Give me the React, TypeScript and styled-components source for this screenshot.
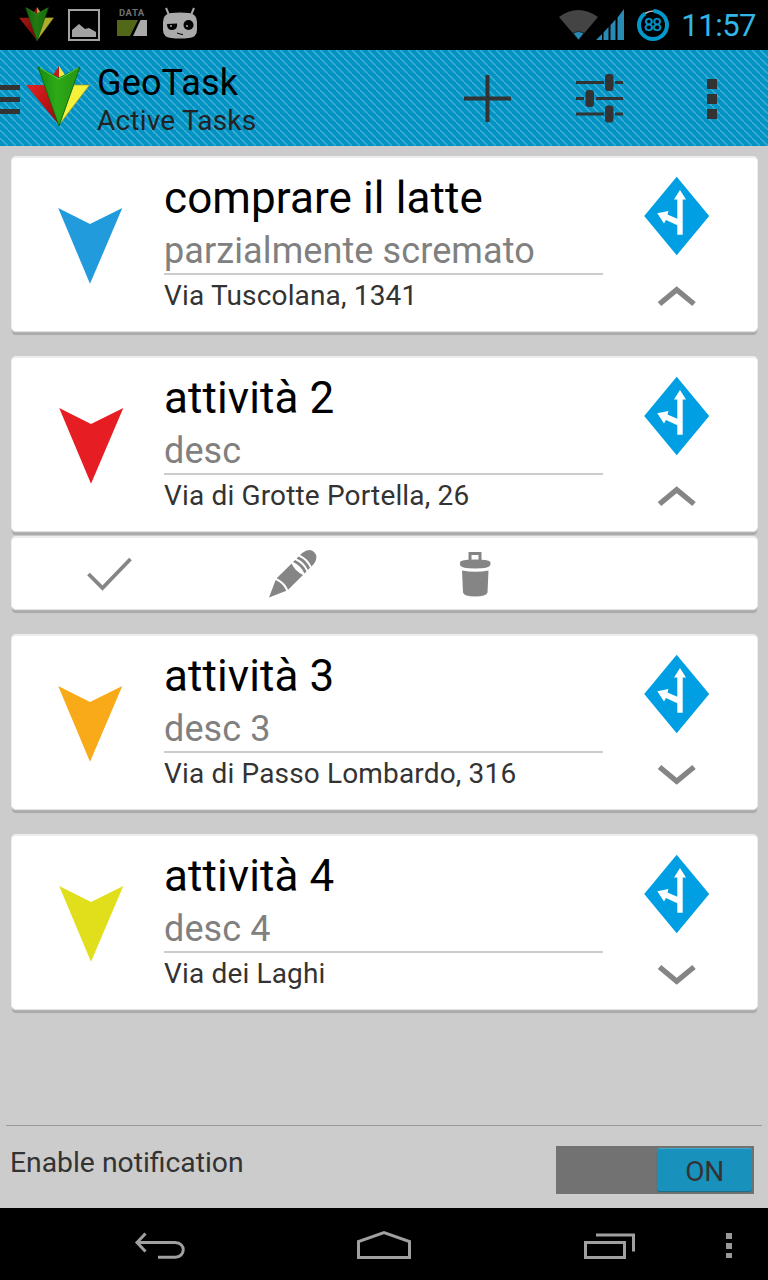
import React from "react";
import styled, { createGlobalStyle } from "styled-components";

const GlobalStyle = createGlobalStyle`
  *, *::before, *::after { box-sizing: border-box; }
  body { margin: 0; background: #ccc; font-family: Roboto, "Liberation Sans", sans-serif; }
  svg { display: block; }
`;

const Screen = styled.div`
  width: 768px;
  height: 1280px;
  display: flex;
  flex-direction: column;
  background: #cccccc;
  overflow: hidden;
  white-space: nowrap;
`;

const StatusBar = styled.header`
  height: 50px;
  flex: none;
  display: flex;
  justify-content: space-between;
  background: #000;
`;

const StatusGroup = styled.div`
  display: flex;
  align-items: center;
`;

const Clock = styled.time`
  width: 98px;
  padding: 1px 12px 0 0;
  display: flex;
  justify-content: flex-end;
  font-size: 31px;
  letter-spacing: -0.5px;
  line-height: 50px;
  color: #33b5e5;
`;

const ActionBar = styled.nav`
  height: 96px;
  flex: none;
  display: flex;
  background-color: #0093c4;
  background-image: linear-gradient(45deg, transparent 41%, #44aed3 46%, #44aed3 54%, transparent 59%);
  background-size: 8px 8px;
`;

const Titles = styled.div`
  flex: 1;
  padding: 12px 0 0 4px;
`;

const AppName = styled.h1`
  margin: 0;
  font-size: 36px;
  font-weight: 400;
  line-height: 42px;
  letter-spacing: 0.15px;
  color: #000;
`;

const Subtitle = styled.div`
  font-size: 28px;
  line-height: 33px;
  letter-spacing: 0.2px;
  color: #222;
`;

const BarButton = styled.button`
  width: 112px;
  height: 96px;
  padding: 0;
  border: 0;
  background: none;
`;

const TaskList = styled.main`
  flex: 1;
  display: flex;
  flex-direction: column;
  gap: 24px;
  padding: 10px 10px 0 11px;
`;

const Surface = styled.div`
  background: #fff;
  border: 1px solid #ededed;
  border-top-width: 2px;
  border-bottom: 1px solid #e2e2e2;
  border-radius: 5px;
  box-shadow: 0 1px 0 #b4b4b4, 0 4px 1px -1px #a9a9a9;
`;

const Card = styled(Surface)`
  height: 176px;
  display: flex;
`;

const Marker = styled.div<{ $shift: number }>`
  width: 152px;
  flex: none;
  padding: 50px 0 0 ${(p) => 46 + p.$shift}px;
`;

const Details = styled.div`
  width: 439px;
  flex: none;
  padding-top: 14px;
`;

const TaskTitle = styled.h2`
  margin: 0;
  font-size: 44px;
  font-weight: 400;
  line-height: 52px;
  letter-spacing: 0.1px;
  color: #000;
`;

const Description = styled.div`
  height: 51px;
  border-bottom: 2px solid #ccc;
  font-size: 36px;
  line-height: 54px;
  letter-spacing: 0.1px;
  color: #808080;
`;

const Address = styled.div`
  font-size: 28px;
  line-height: 42px;
  letter-spacing: 0.16px;
  color: #333;
`;

const CardActions = styled.div`
  flex: 1;
  padding: 18px 0 0 41px;
`;

const Chevron = styled.svg<{ $open: boolean }>`
  margin: 30px 0 0 13px;
  transform: ${(p) => (p.$open ? "none" : "translateY(-1px) scaleY(-1)")};
`;

const Tools = styled(Surface)`
  height: 74px;
  margin-top: 4px;
  display: flex;
`;

const Tool = styled.button`
  width: 183px;
  padding: 0 0 0 12px;
  border: 0;
  background: none;
  display: flex;
  align-items: center;
  justify-content: center;
`;

const Footer = styled.footer`
  height: 83px;
  flex: none;
  margin: 0 6px;
  padding: 20px 8px 0 4px;
  border-top: 1px solid #999;
  display: flex;
  justify-content: space-between;
`;

const Label = styled.label`
  font-size: 28.3px;
  line-height: 33px;
  color: #333;
`;

const Switch = styled.div`
  width: 198px;
  height: 48px;
  padding: 2px 2px 2px 101px;
  background: #727272;
`;

const Thumb = styled.div`
  height: 43px;
  border-radius: 3px;
  background: #1991bd;
  border-top: 1px solid #45a7ca;
  box-shadow: 0 1px 1px #146c8d;
  text-align: center;
  font-size: 28px;
  line-height: 45px;
  letter-spacing: -0.3px;
  color: #333;
`;

const NavBar = styled.nav`
  height: 72px;
  flex: none;
  background: #000;
  display: flex;
  align-items: center;
`;

function GeoLogo({ width, height }: { width: number; height: number }) {
  return (
    <svg width={width} height={height} viewBox="0 0 64 60" preserveAspectRatio="none">
      <defs>
        <linearGradient id="green" x1="0" x2="1">
          <stop offset="0" stopColor="#168a10" />
          <stop offset=".45" stopColor="#2faa17" />
          <stop offset="1" stopColor="#239512" />
        </linearGradient>
        <linearGradient id="red" x1="0" x2="1" y2="1">
          <stop offset="0" stopColor="#e02522" />
          <stop offset=".6" stopColor="#b81111" />
          <stop offset="1" stopColor="#861010" />
        </linearGradient>
      </defs>
      <path d="M33 0L27 9l6 4z" fill="#c41a18" />
      <path d="M33 0l6 9-6 4z" fill="#f5ec3d" />
      <path d="M0 19h22l11 40z" fill="url(#red)" />
      <path d="M63.500 19H43L33 59z" fill="#f6f23c" stroke="#a59819" strokeWidth=".7" />
      <path d="M12 1l21 11L54 1 33 60z" fill="url(#green)" stroke="#116d10" strokeWidth="1" />
      <path d="M14 2l19 11L52 2" fill="none" stroke="#5fc94b" strokeWidth="1" />
    </svg>
  );
}

function StatusLeft() {
  return (
    <svg width="210" height="50">
      <g opacity=".72">
        <svg x="19" y="7">
          <GeoLogo width={35} height={34} />
        </svg>
      </g>
      <rect x="69" y="10" width="30" height="30" fill="none" stroke="#a3a3a3" strokeWidth="2" />
      <path d="M72 37v-7l7-6 6 5 4-1 7 4v5z" fill="#a3a3a3" />
      <text x="119" y="16" fontSize="9.5" fontWeight="700" letterSpacing=".8" textLength="26" fill="#707070">DATA</text>
      <path d="M117 20h21l-8 16h-13z" fill="#536719" />
      <path d="M140.500 20h6.500v16h-14z" fill="#aaa" />
      <path d="M166 8l3 7M194 8l-3 7" stroke="#aaa" strokeWidth="2" />
      <path d="M171 13q9-1 18 0 8 1 8 9v8q0 7-8 8-9 1-18 0-8-1-8-8v-8q0-8 8-9z" fill="#aaa" />
      <path d="M167 24l10-.5q1 6-5 6.500-5 0-5-6z" fill="#000" />
      <circle cx="188.500" cy="25" r="5" fill="#000" />
      <circle cx="171" cy="26" r="1" fill="#aaa" />
      <circle cx="187" cy="26" r="1" fill="#aaa" />
      <path d="M177 33l3 1 3 .5" stroke="#000" fill="none" />
    </svg>
  );
}

function StatusRight() {
  return (
    <svg width="112" height="50">
      <path d="M1 17Q20 3 40 17L20.500 40z" fill="#444" />
      <path d="M15 33q5.500-3 11 0l-5.500 7z" fill="#278bb3" stroke="#000" strokeWidth=".6" />
      <path d="M38 40l6-6v6zM45.500 40v-7.500l5-5.500v13zM52.500 40V25l5-5.500V40zM59.500 40V17.500L66 9v31z" fill="#278bb3" />
      <circle cx="95" cy="25" r="14" fill="none" stroke="#0099cc" strokeWidth="4" />
      <path d="M87 13.500Q91 11 95.500 11" fill="none" stroke="#000" strokeWidth="6" />
      <path d="M87 13.500Q91 11 95.500 11" fill="none" stroke="#bbb" strokeWidth="1.500" />
      <text x="95" y="31.300" fontSize="17.500" textLength="18" textAnchor="middle" fill="#0099cc" stroke="#0099cc" strokeWidth=".4">88</text>
    </svg>
  );
}

function RouteSign() {
  return (
    <svg width="66" height="80" viewBox="0 0 66 80">
      <path d="M32.700.700L65.200 40 32.700 79.300.200 40z" fill="#009fe3" />
      <path d="M36 14L42 23.500H38.700V58.700H33.300V49.300L22 44 20 47.500 13.300 37.300 24.500 35 23.500 38.500 33.300 42.700V23.500H30z" fill="#fff" />
    </svg>
  );
}

function Pencil() {
  return (
    <svg width="50" height="50" viewBox="0 0 50 50" fill="#858585">
      <g transform="translate(1 48.500) rotate(-45) scale(1 .95)">
        <path d="M0 0L17-8q3 8 0 16z" />
        <path d="M19-8.500h21q-3 8.500 0 17H19q3-8.500 0-17z" />
        <path d="M42-8.500h3q3 8.500 0 17h-3q3-8.500 0-17zM47-8.500h3q3 8.500 0 17h-3q3-8.500 0-17z" />
        <path d="M52-8.500h3q9 1.500 9 8.500t-9 8.500h-3q3-8.500 0-17z" />
      </g>
    </svg>
  );
}

interface Task {
  title: string;
  description: string;
  address: string;
  color: string;
  shift: number;
  open: boolean;
  tools?: boolean;
}

const tasks: Task[] = [
  { title: "comprare il latte", description: "parzialmente scremato", address: "Via Tuscolana, 1341", color: "#219bdb", shift: 0, open: true },
  { title: "attività 2", description: "desc", address: "Via di Grotte Portella, 26", color: "#e71d24", shift: 1, open: true, tools: true },
  { title: "attività 3", description: "desc 3", address: "Via di Passo Lombardo, 316", color: "#f9aa19", shift: 0, open: false },
  { title: "attività 4", description: "desc 4", address: "Via dei Laghi", color: "#e1df1b", shift: 0.5, open: false },
];

function TaskItem({ task }: { task: Task }) {
  return (
    <section>
      <Card>
        <Marker $shift={task.shift}>
          <svg width="65" height="77">
            <path d="M.2 0L32 16 64.300 0 32 75.800z" fill={task.color} />
          </svg>
        </Marker>
        <Details>
          <TaskTitle>{task.title}</TaskTitle>
          <Description>{task.description}</Description>
          <Address>{task.address}</Address>
        </Details>
        <CardActions>
          <RouteSign />
          <Chevron $open={task.open} width="40" height="22">
            <path d="M2.500 18L19.700 3.700 37 18" fill="none" stroke="#858585" strokeWidth="5.400" />
          </Chevron>
        </CardActions>
      </Card>
      {task.tools && (
        <Tools>
          <Tool>
            <svg width="46" height="34">
              <path d="M1.500 17l14 14L43.500 2" fill="none" stroke="#858585" strokeWidth="3.800" />
            </svg>
          </Tool>
          <Tool>
            <Pencil />
          </Tool>
          <Tool>
            <svg width="32" height="46" fill="#858585">
              <path d="M10 9V2.500h10V9" fill="none" stroke="#858585" strokeWidth="3" />
              <path d="M0 11.500q0-3 15.200-3t15.200 3v2.500q-1 3.500-15.200 3.500T0 14z" />
              <path d="M2 19.500q13.200 2.500 26.500 0l-1 22q-1 4-12.300 4t-12.200-4z" />
            </svg>
          </Tool>
        </Tools>
      )}
    </section>
  );
}

export default function App() {
  return (
    <Screen>
      <GlobalStyle />
      <StatusBar>
        <StatusGroup>
          <StatusLeft />
        </StatusGroup>
        <StatusGroup>
          <StatusRight />
          <Clock>11:57</Clock>
        </StatusGroup>
      </StatusBar>
      <ActionBar>
        <svg width="93" height="96">
          <path d="M0 35h20v5H0zM0 47h20v5H0zM0 59h20v5H0z" fill="#333" />
          <svg x="26" y="16">
            <GeoLogo width={64} height={60} />
          </svg>
        </svg>
        <Titles>
          <AppName>GeoTask</AppName>
          <Subtitle>Active Tasks</Subtitle>
        </Titles>
        <BarButton>
          <svg width="112" height="96">
            <path d="M32 46.500h47v4H32zM53.500 25h4v47h-4z" fill="#333" />
          </svg>
        </BarButton>
        <BarButton>
          <svg width="112" height="96" fill="#333">
            <path d="M32 31h28v3H32zM71 31h8v3h-8zM32 47h8v3h-8zM52 47h27v3H52zM32 62.500h28v3H32zM71 62.500h8v3h-8z" />
            <rect x="61" y="24" width="8.500" height="17" rx="3" />
            <rect x="41.500" y="40" width="8.500" height="17" rx="3" />
            <rect x="61" y="55.500" width="8.500" height="17" rx="3" />
          </svg>
        </BarButton>
        <BarButton>
          <svg width="112" height="96">
            <path d="M51 29h10v10H51zM51 44h10v10H51zM51 59h10v10H51z" fill="#333" />
          </svg>
        </BarButton>
      </ActionBar>
      <TaskList>
        {tasks.map((t) => (
          <TaskItem key={t.title} task={t} />
        ))}
      </TaskList>
      <Footer>
        <Label>Enable notification</Label>
        <Switch>
          <Thumb>ON</Thumb>
        </Switch>
      </Footer>
      <NavBar>
        <svg width="768" height="72" fill="none" stroke="#a0a0a0" strokeWidth="3">
          <path d="M145.500 25.500L137 34.500l8.500 9M137 34.500h38c11 0 11 14.700 0 14.700h-17" />
          <path d="M358.500 49.500v-16L384 24.500l25.500 9v16z" />
          <path d="M585.500 34.500h39v15h-39zM596 27h37.500v16.500" />
          <path d="M726 25h6v6h-6zM726 35h6v6h-6zM726 45h6v5h-6z" fill="#999" stroke="none" />
        </svg>
      </NavBar>
    </Screen>
  );
}
